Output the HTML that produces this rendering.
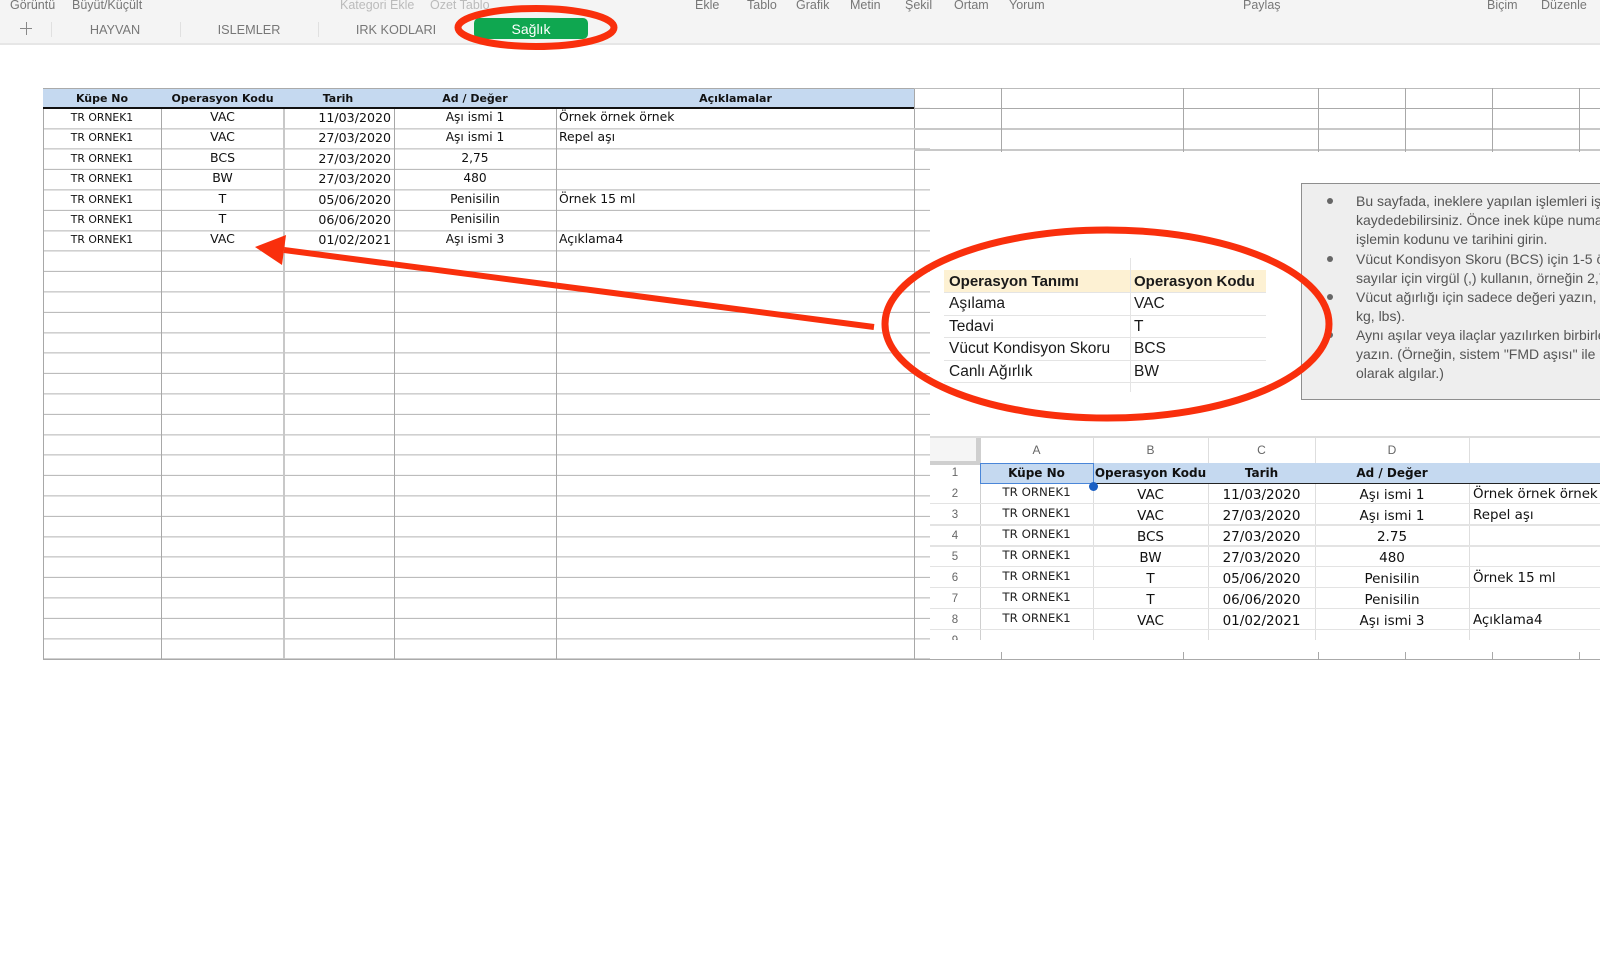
<!DOCTYPE html>
<html lang="tr">
<head>
<meta charset="utf-8">
<title>Sağlık</title>
<style>
html,body{margin:0;padding:0;background:#fff}
body{width:1600px;height:960px;position:relative;overflow:hidden;font-family:"DejaVu Sans",sans-serif;color:#111}
div,span{position:absolute;white-space:nowrap}
.bar{left:0;top:0;width:1600px;height:43px;background:#f4f4f4;border-bottom:2px solid #e6e6e6}
.tb{top:-3.5px;font:12.5px/16px "Liberation Sans",sans-serif;color:#777}
.lt{color:#bbb}
.tab{top:21px;font:12.7px/18px "Liberation Sans",sans-serif;color:#777;transform:translateX(-50%)}
.sep{top:22px;width:1px;height:15px;background:#e0e0e0}
.pill{left:474px;top:18px;width:114px;height:21px;background:#0fa750;border-radius:5px;color:#fff;font:14px/23px "Liberation Sans",sans-serif;text-align:center}
.grid{left:43px;top:88px;width:887px;height:572px;background:repeating-linear-gradient(to bottom,#fff 0,#fff 19.4px,#b3b3b3 19.4px,#b3b3b3 20.4px);background-position:0 0.4px}
.v{width:1px;background:#a8a8a8}
.h{height:1px;background:#aaa}
.hd{left:43px;top:88px;width:871px;height:19px;background:#c5d9f0;border-top:1px solid #aaa}
.hl{left:43px;top:107px;width:871px;height:1.5px;background:#111}
.hc{top:91px;font:bold 11px/16px "DejaVu Sans",sans-serif;text-align:center;color:#111}
.r{left:0;width:930px;height:20px}
.r span{top:0}
.a,.b,.c,.d{text-align:center}
.a{left:43px;width:118px;font-size:10.8px;line-height:20px}
.b{left:162px;width:121px;font-size:12.5px;line-height:18px}
.c{left:284px;width:107px;text-align:right;font-size:12.6px;line-height:18px;margin-top:1px}
.d{left:395px;width:160px;font-size:12.2px;line-height:18px}
.e{left:559px;font-size:12.4px;line-height:18px}
.patch{left:930px;top:152px;width:670px;height:500px;background:#fff}
.note{left:1301px;top:183px;width:299px;height:215px;background:#eeeeee;border:1px solid #8e8e8e;border-right:0;overflow:hidden;font:14px/19px "Liberation Sans",sans-serif;color:#555}
.note span{left:54px}
.dot{left:25px;width:6px;height:6px;border-radius:50%;background:#666}
.ops{font:15.5px/22px "Liberation Sans",sans-serif;color:#111}
.oh{left:944px;top:270px;width:322px;height:23px;background:#fdf1d3}
.ol{left:944px;width:322px;height:1px;background:#e4e4e4}
.ot{left:949px;color:#1a1a1a}
.ok{left:1134px;color:#1a1a1a}
.sh{left:930px;top:436px;width:670px;height:204px;overflow:hidden;background:#fff;border-top:2px solid #dcdcdc;box-sizing:border-box}
.corner{left:0;top:0;width:46px;height:23px;background:#f5f5f5;border-right:4px solid #cfcfcf;border-bottom:4px solid #cfcfcf}
.sv{width:1px;background:#dedede;top:0;height:202px}
.shh{height:1px;left:0;width:670px;background:#e3e3e3}
.col{top:3px;font:12px/18px "Liberation Sans",sans-serif;color:#666;text-align:center}
.sh .rn{left:0;width:50px;text-align:center;font:11.5px/20px "Liberation Sans",sans-serif;color:#666}
.s1{left:50px;width:113px;text-align:center;font-size:11.8px;line-height:18px;color:#222}
.s2{left:163px;width:115px;text-align:center;font-size:13.5px;line-height:22px}
.s3{left:278px;width:107px;text-align:center;font-size:13.5px;line-height:22px}
.s4{left:385px;width:154px;text-align:center;font-size:13.5px;line-height:22px}
.s5{left:543px;font-size:13.4px;line-height:22px}
.sb{font-weight:bold;font-size:12px;line-height:20px;text-align:center;color:#111}
svg{position:absolute;left:0;top:0}
</style>
</head>
<body>
<div class="bar"></div>
<span class="tb" style="left:10px">Görüntü</span>
<span class="tb" style="left:72px">Büyüt/Küçült</span>
<span class="tb lt" style="left:340px">Kategori Ekle</span>
<span class="tb lt" style="left:430px">Özet Tablo</span>
<span class="tb" style="left:695px">Ekle</span>
<span class="tb" style="left:747px">Tablo</span>
<span class="tb" style="left:796px">Grafik</span>
<span class="tb" style="left:850px">Metin</span>
<span class="tb" style="left:905px">Şekil</span>
<span class="tb" style="left:954px">Ortam</span>
<span class="tb" style="left:1009px">Yorum</span>
<span class="tb" style="left:1243px">Paylaş</span>
<span class="tb" style="left:1487px">Biçim</span>
<span class="tb" style="left:1541px">Düzenle</span>

<div style="left:20px;top:28px;width:12px;height:1px;background:#888"></div>
<div style="left:26px;top:22px;width:1px;height:13px;background:#888"></div>
<div class="sep" style="left:51px"></div>
<span class="tab" style="left:115px">HAYVAN</span>
<div class="sep" style="left:180px"></div>
<span class="tab" style="left:249px">ISLEMLER</span>
<div class="sep" style="left:318px"></div>
<span class="tab" style="left:396px">IRK KODLARI</span>
<div class="pill">Sağlık</div>

<!-- main grid -->
<div class="grid"></div>
<div class="v" style="left:43px;top:88px;height:572px"></div>
<div class="v" style="left:161px;top:88px;height:572px"></div>
<div class="v" style="left:283px;top:88px;height:572px;width:2px;background:#c8c8c8"></div>
<div class="v" style="left:394px;top:88px;height:572px"></div>
<div class="v" style="left:556px;top:88px;height:572px"></div>
<div class="v" style="left:914px;top:88px;height:572px"></div>
<div class="h" style="left:43px;top:659px;width:1557px"></div>
<div class="h" style="left:914px;top:88px;width:686px;background:#bbb"></div>
<div class="h" style="left:914px;top:108px;width:686px"></div>
<div class="h" style="left:914px;top:128px;width:686px;height:2px;background:#c8c8c8"></div>
<div class="h" style="left:914px;top:149px;width:686px;height:2px;background:#c8c8c8"></div>
<div class="v" style="left:1001px;top:88px;height:64px"></div>
<div class="v" style="left:1183px;top:88px;height:64px"></div>
<div class="v" style="left:1318px;top:88px;height:64px"></div>
<div class="v" style="left:1405px;top:88px;height:64px"></div>
<div class="v" style="left:1492px;top:88px;height:64px"></div>
<div class="v" style="left:1579px;top:88px;height:64px"></div>

<div class="hd"></div>
<div class="hl"></div>
<span class="hc" style="left:43px;width:118px">Küpe No</span>
<span class="hc" style="left:162px;width:121px">Operasyon Kodu</span>
<span class="hc" style="left:284px;width:108px">Tarih</span>
<span class="hc" style="left:395px;width:160px">Ad / Değer</span>
<span class="hc" style="left:557px;width:357px">Açıklamalar</span>

<div class="r" style="top:108px"><span class="a">TR ORNEK1</span><span class="b">VAC</span><span class="c">11/03/2020</span><span class="d">Aşı ismi 1</span><span class="e">Örnek örnek örnek</span></div>
<div class="r" style="top:128px"><span class="a">TR ORNEK1</span><span class="b">VAC</span><span class="c">27/03/2020</span><span class="d">Aşı ismi 1</span><span class="e">Repel aşı</span></div>
<div class="r" style="top:149px"><span class="a">TR ORNEK1</span><span class="b">BCS</span><span class="c">27/03/2020</span><span class="d">2,75</span></div>
<div class="r" style="top:169px"><span class="a">TR ORNEK1</span><span class="b">BW</span><span class="c">27/03/2020</span><span class="d">480</span></div>
<div class="r" style="top:190px"><span class="a">TR ORNEK1</span><span class="b">T</span><span class="c">05/06/2020</span><span class="d">Penisilin</span><span class="e">Örnek 15 ml</span></div>
<div class="r" style="top:210px"><span class="a">TR ORNEK1</span><span class="b">T</span><span class="c">06/06/2020</span><span class="d">Penisilin</span></div>
<div class="r" style="top:230px"><span class="a">TR ORNEK1</span><span class="b">VAC</span><span class="c">01/02/2021</span><span class="d">Aşı ismi 3</span><span class="e">Açıklama4</span></div>

<div class="patch"></div>

<!-- operations table -->
<div class="oh"></div>
<div class="v" style="left:1130px;top:258px;height:134px;background:#e4e4e4"></div>
<div class="ol" style="top:292px"></div>
<div class="ol" style="top:315px"></div>
<div class="ol" style="top:337px"></div>
<div class="ol" style="top:360px"></div>
<div class="ol" style="top:382px"></div>
<div class="ops">
<span class="ot" style="top:271px;font-weight:bold;font-size:15px">Operasyon Tanımı</span>
<span class="ok" style="top:271px;font-weight:bold;font-size:15px">Operasyon Kodu</span>
<span class="ot" style="top:293px">Aşılama</span><span class="ok" style="top:293px">VAC</span>
<span class="ot" style="top:316px">Tedavi</span><span class="ok" style="top:316px">T</span>
<span class="ot" style="top:338px">Vücut Kondisyon Skoru</span><span class="ok" style="top:338px">BCS</span>
<span class="ot" style="top:361px">Canlı Ağırlık</span><span class="ok" style="top:361px">BW</span>
</div>

<!-- note -->
<div class="note">
<div class="dot" style="top:14px"></div>
<span style="top:8px">Bu sayfada, ineklere yapılan işlemleri işletmenize</span>
<span style="top:27px">kaydedebilirsiniz. Önce inek küpe numarasını,</span>
<span style="top:46px">işlemin kodunu ve tarihini girin.</span>
<div class="dot" style="top:72px"></div>
<span style="top:66px">Vücut Kondisyon Skoru (BCS) için 1-5 önerilir,</span>
<span style="top:85px">sayılar için virgül (,) kullanın, örneğin 2,75</span>
<div class="dot" style="top:110px"></div>
<span style="top:104px">Vücut ağırlığı için sadece değeri yazın, birim yok</span>
<span style="top:123px">kg, lbs).</span>
<div class="dot" style="top:148px"></div>
<span style="top:142px">Aynı aşılar veya ilaçlar yazılırken birbirleriyle aynı</span>
<span style="top:161px">yazın. (Örneğin, sistem "FMD aşısı" ile "FMD"</span>
<span style="top:180px">olarak algılar.)</span>
</div>

<!-- embedded sheet -->
<div class="sh">
<div class="corner"></div>
<div class="sv" style="left:50px;background:#cfcfcf"></div>
<div class="sv" style="left:163px"></div>
<div class="sv" style="left:278px"></div>
<div class="sv" style="left:385px"></div>
<div class="sv" style="left:539px"></div>
<span class="col" style="left:50px;width:113px">A</span>
<span class="col" style="left:163px;width:115px">B</span>
<span class="col" style="left:278px;width:107px">C</span>
<span class="col" style="left:385px;width:154px">D</span>
<div style="left:50px;top:25px;width:620px;height:20px;background:#c5d9f0"></div>
<div style="left:50px;top:45px;width:620px;height:1px;background:#222"></div>
<div style="left:50px;top:25px;width:112px;height:19px;border:1.5px solid #4a86d8;box-sizing:content-box"></div>
<div style="left:159px;top:44px;width:9px;height:9px;border-radius:50%;background:#1a5fc4;z-index:3"></div>
<span class="sb" style="left:50px;top:25px;width:113px">Küpe No</span>
<span class="sb" style="left:163px;top:25px;width:115px">Operasyon Kodu</span>
<span class="sb" style="left:278px;top:25px;width:107px">Tarih</span>
<span class="sb" style="left:385px;top:25px;width:154px">Ad / Değer</span>

<div class="shh" style="top:65px"></div>
<div class="shh" style="top:86px;height:2px"></div>
<div class="shh" style="top:107px;height:2px"></div>
<div class="shh" style="top:128px"></div>
<div class="shh" style="top:149px"></div>
<div class="shh" style="top:170px"></div>
<div class="shh" style="top:191px"></div>

<span class="rn" style="top:25px">1</span>
<span class="rn" style="top:46px">2</span>
<span class="rn" style="top:67px">3</span>
<span class="rn" style="top:88px">4</span>
<span class="rn" style="top:109px">5</span>
<span class="rn" style="top:130px">6</span>
<span class="rn" style="top:151px">7</span>
<span class="rn" style="top:172px">8</span>
<span class="rn" style="top:193px">9</span>

<span class="s1" style="top:45px">TR ORNEK1</span><span class="s2" style="top:46px">VAC</span><span class="s3" style="top:46px">11/03/2020</span><span class="s4" style="top:46px">Aşı ismi 1</span><span class="s5" style="top:46px">Örnek örnek örnek</span>
<span class="s1" style="top:66px">TR ORNEK1</span><span class="s2" style="top:67px">VAC</span><span class="s3" style="top:67px">27/03/2020</span><span class="s4" style="top:67px">Aşı ismi 1</span><span class="s5" style="top:67px">Repel aşı</span>
<span class="s1" style="top:87px">TR ORNEK1</span><span class="s2" style="top:88px">BCS</span><span class="s3" style="top:88px">27/03/2020</span><span class="s4" style="top:88px">2.75</span>
<span class="s1" style="top:108px">TR ORNEK1</span><span class="s2" style="top:109px">BW</span><span class="s3" style="top:109px">27/03/2020</span><span class="s4" style="top:109px">480</span>
<span class="s1" style="top:129px">TR ORNEK1</span><span class="s2" style="top:130px">T</span><span class="s3" style="top:130px">05/06/2020</span><span class="s4" style="top:130px">Penisilin</span><span class="s5" style="top:130px">Örnek 15 ml</span>
<span class="s1" style="top:150px">TR ORNEK1</span><span class="s2" style="top:151px">T</span><span class="s3" style="top:151px">06/06/2020</span><span class="s4" style="top:151px">Penisilin</span>
<span class="s1" style="top:171px">TR ORNEK1</span><span class="s2" style="top:172px">VAC</span><span class="s3" style="top:172px">01/02/2021</span><span class="s4" style="top:172px">Aşı ismi 3</span><span class="s5" style="top:172px">Açıklama4</span>
</div>

<div class="v" style="left:1001px;top:652px;height:8px"></div>
<div class="v" style="left:1183px;top:652px;height:8px"></div>
<div class="v" style="left:1318px;top:652px;height:8px"></div>
<div class="v" style="left:1405px;top:652px;height:8px"></div>
<div class="v" style="left:1492px;top:652px;height:8px"></div>
<div class="v" style="left:1579px;top:652px;height:8px"></div>

<!-- annotations -->
<svg width="1600" height="960" viewBox="0 0 1600 960">
<ellipse cx="536" cy="27.5" rx="78" ry="19" fill="none" stroke="#f92f0c" stroke-width="7"/>
<ellipse cx="1107" cy="324" rx="222" ry="94" fill="none" stroke="#f92f0c" stroke-width="7"/>
<path d="M284 250 L874 327" stroke="#f92f0c" stroke-width="6" fill="none"/>
<path d="M255 247 L286 235 L282 265 Z" fill="#f92f0c"/>
</svg>
</body>
</html>
